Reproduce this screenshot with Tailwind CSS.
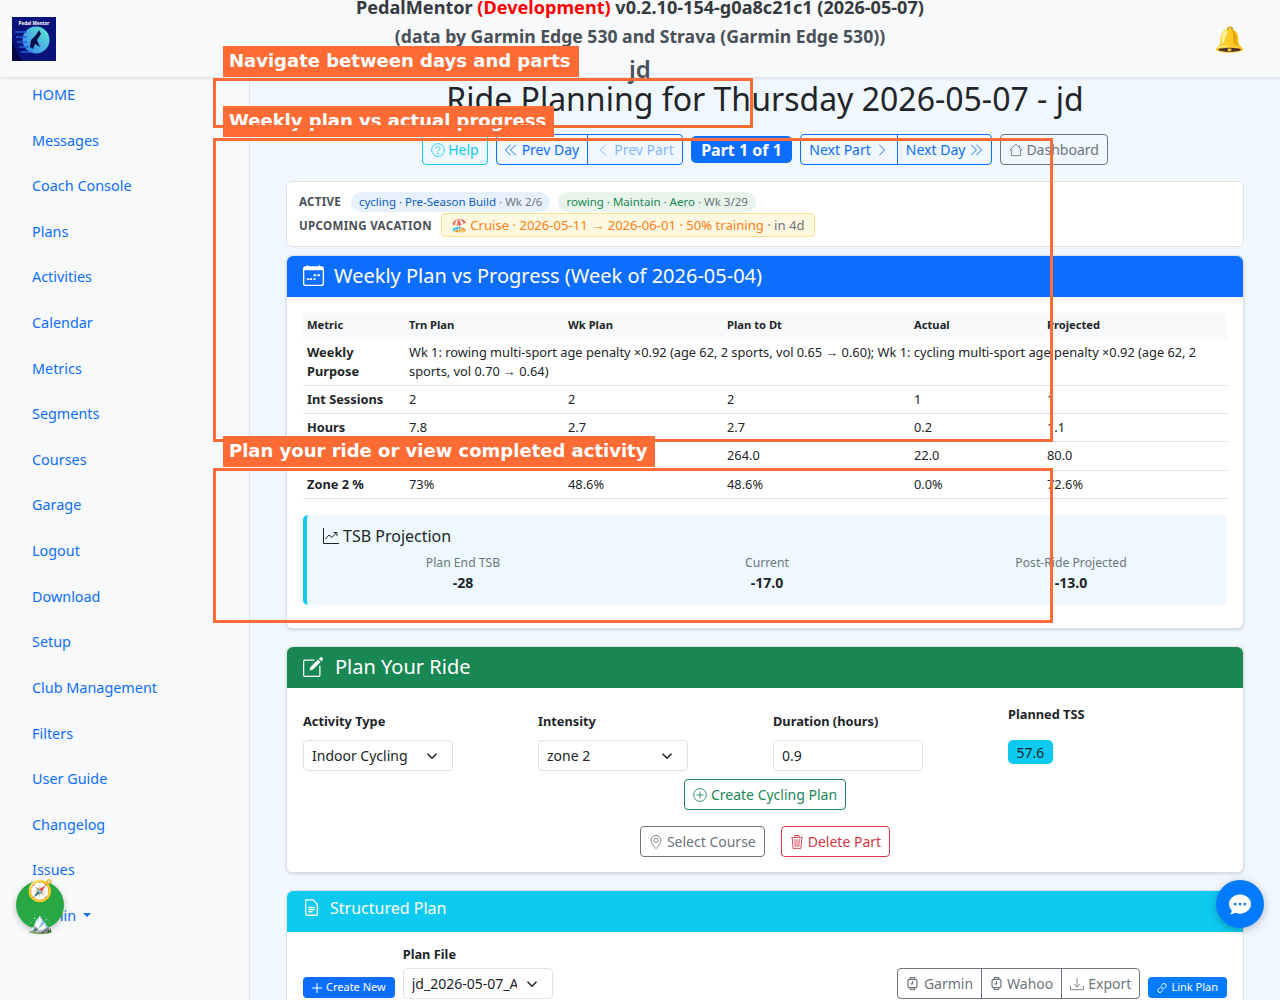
<!DOCTYPE html>
<html><head><meta charset="utf-8"><script src="https://cdn.jsdelivr.net/npm/@tailwindcss/browser@4"></script></head>
<body class="m-0">
<div class="relative h-[1000px] w-[1280px] overflow-hidden bg-[#f0f7fe] font-['Noto_Sans',sans-serif] text-[#212529]">
  <header class="relative z-10 flex h-[77px] items-center justify-between bg-[#f8f9fa] pl-3 pr-[35px] shadow-[0_1px_4px_rgba(0,0,0,0.12)]">
    <svg class="h-[44px] w-[44px] shrink-0" viewBox="0 0 44 44"><defs><linearGradient id="lg" x1="0" y1="1" x2="1" y2="0"><stop offset="0" stop-color="#2f7df0"/><stop offset="1" stop-color="#63ecd0"/></linearGradient></defs><rect width="44" height="44" fill="#07127a"/><path d="M0 26 L10 44 H0Z" fill="#020540"/><circle cx="24" cy="23" r="13.500" fill="url(#lg)"/><path d="M3 15 H15 M4 20 H15 M5 25 H15 M7 30 H17 M9 35 H19" stroke="#2a5fd0" stroke-width="1.600"/><path d="M27 13 L29 17 L25 23 L28 30 L23 27 L21 32 L18 30 L19 23 L24 18Z" fill="#08104a"/><text x="22" y="7.500" text-anchor="middle" font-size="4.600" font-weight="700" fill="#fff">Pedal Mentor</text></svg>
    <div class="absolute left-0 right-0 top-[-7px] text-center text-[17.6px] leading-[29px] font-bold text-[#343a40]">
      <div class="text-[18.1px]">PedalMentor <span class="text-[#ff0000]">(Development)</span> v0.2.10-154-g0a8c21c1 (2026-05-07)</div>
      <div class="text-[#495057]">(data by Garmin Edge 530 and Strava (Garmin Edge 530))</div>
      <div class="mt-[3px] text-[24px] font-semibold text-[#495057]">jd</div>
    </div>
    <span class="text-[25px] leading-none">🔔</span>
  </header>
  <div class="flex h-[923px]">
    <aside class="w-[250px] shrink-0 border-r border-[#dee2e6] bg-[#f8f9fa] pl-8 pt-[6px]">
      <nav class="flex flex-col gap-[22.62px] text-[14.4px] leading-[23px] text-[#0d6efd]">
        <a>HOME</a><a>Messages</a><a>Coach Console</a><a>Plans</a><a>Activities</a><a>Calendar</a><a>Metrics</a><a>Segments</a><a>Courses</a><a>Garage</a><a>Logout</a><a>Download</a><a>Setup</a><a>Club Management</a><a>Filters</a><a>User Guide</a><a>Changelog</a><a>Issues</a>
        <a class="flex items-center gap-[7px]">Admin <span class="h-0 w-0 border-x-[4px] border-t-[4px] border-x-transparent border-t-[#0d6efd]"></span></a>
      </nav>
    </aside>
    <main class="min-w-0 flex-1 px-[36px]">
      <h1 class="mt-[2px] text-center text-[32px] leading-[40px] font-normal text-[#212529]">Ride Planning for Thursday 2026-05-07 - jd</h1>
      <div class="mt-[15px] flex items-center justify-center gap-2 text-[14px] leading-[20px]">
        <a class="flex h-[31px] items-center gap-[3px] rounded border border-[#0dcaf0] px-2 text-[#0dcaf0]"><svg class="h-[14px] w-[14px]" viewBox="0 0 16 16" fill="none" stroke="currentColor"><circle cx="8" cy="8" r="7.3"/><path d="M5.6 6.2c0-3 4.8-3 4.8-.1 0 1.8-2.4 1.800-2.400 3.600" /><circle cx="8" cy="11.800" r=".5" fill="currentColor"/></svg>Help</a>
        <div class="flex h-[31px]">
          <a class="flex items-center gap-[4px] rounded-l border border-[#0d6efd] pl-[7px] pr-2 text-[#0d6efd]"><svg class="h-[14px] w-[14px]" viewBox="0 0 16 16" fill="none" stroke="currentColor" stroke-width="1.100"><path d="M7.500 2 1.500 8l6 6M13.500 2l-6 6 6 6"/></svg>Prev Day</a>
          <a class="ml-[-1px] flex items-center gap-[4px] rounded-r border border-[#0d6efd] px-2 text-[#86b7fe]"><svg class="h-[14px] w-[14px]" viewBox="0 0 16 16" fill="none" stroke="currentColor" stroke-width="1.100"><path d="M11 2 5 8l6 6"/></svg>Prev Part</a>
        </div>
        <span class="flex h-[27px] items-center rounded-[5px] bg-[#0d6efd] px-[10.5px] text-[16px] font-bold text-white">Part 1 of 1</span>
        <div class="flex h-[31px]">
          <a class="flex items-center gap-[4px] rounded-l border border-[#0d6efd] px-2 text-[#0d6efd]">Next Part<svg class="h-[14px] w-[14px]" viewBox="0 0 16 16" fill="none" stroke="currentColor" stroke-width="1.100"><path d="m5 2 6 6-6 6"/></svg></a>
          <a class="ml-[-1px] flex items-center gap-[4px] rounded-r border border-[#0d6efd] px-2 text-[#0d6efd]">Next Day<svg class="h-[14px] w-[14px]" viewBox="0 0 16 16" fill="none" stroke="currentColor" stroke-width="1.100"><path d="m2.500 2 6 6-6 6M8.500 2l6 6-6 6"/></svg></a>
        </div>
        <a class="flex h-[31px] items-center gap-[3px] rounded border border-[#6c757d] px-2 text-[#6c757d]"><svg class="h-[14px] w-[14px]" viewBox="0 0 16 16" fill="none" stroke="currentColor"><path d="M8 1.500 1 8h2v6.500h10V8h2zM12 3v3"/></svg>Dashboard</a>
      </div>

      <section class="mt-[16px] flex h-[66px] flex-col justify-center gap-[3px] rounded-[6px] border border-[#dee2e6] bg-white px-3 text-[11.5px]">
        <div class="flex h-[20px] items-center pt-[2px]">
          <span class="mr-[10px] font-bold tracking-[0.3px] text-[#495057]">ACTIVE</span>
          <span class="rounded-full bg-[#e7f1fb] px-2 py-[2px] leading-[16px] text-[#0d5ec0]">cycling · Pre-Season Build <span class="text-[#6c757d]">· Wk 2/6</span></span>
          <span class="ml-[8px] rounded-full bg-[#e8f4ea] px-2 py-[2px] leading-[16px] text-[#198754]">rowing · Maintain · Aero <span class="text-[#6c757d]">· Wk 3/29</span></span>
        </div>
        <div class="flex h-[24px] items-center">
          <span class="mr-[9px] font-bold tracking-[0.35px] text-[#495057]">UPCOMING VACATION</span>
          <span class="mb-[2px] rounded-[4px] border border-[#ffe08a] bg-[#fff8e1] px-[9px] py-[2px] text-[13.1px] leading-[18px] text-[#fd7e14]">🏖️ Cruise · 2026-05-11 → 2026-06-01 · 50% training <span class="text-[#6c757d]">· in 4d</span></span>
        </div>
      </section>

      <section class="mt-2 h-[374px] rounded-[6px] border border-[#dee2e6] bg-white shadow-[0_1px_3px_rgba(0,0,0,0.15)]">
        <div class="flex h-[41px] items-center gap-[10px] rounded-t-[6px] bg-[#0d6efd] px-4 pb-[2px] text-[20px] text-white">
          <svg class="h-[21px] w-[21px]" viewBox="0 0 16 16" fill="currentColor"><path d="M3.500 0a.5.5 0 0 1 .5.5V1h8V.5a.5.5 0 0 1 1 0V1h1a2 2 0 0 1 2 2v11a2 2 0 0 1-2 2H2a2 2 0 0 1-2-2V3a2 2 0 0 1 2-2h1V.5a.5.5 0 0 1 .5-.5zM1 4v10a1 1 0 0 0 1 1h12a1 1 0 0 0 1-1V4H1z"/><path d="M11 7h2v1.500h-2zM8 7h2v1.500H8zM5 10h2v1.500H5zM3 10h1.500v1.500H3zM8 10h1.500v1.500H8z"/></svg>
          Weekly Plan vs Progress (Week of 2026-05-04)
        </div>
        <div class="px-4 pt-4">
          <table class="w-[924px] table-fixed border-collapse text-[12.8px] leading-[19px]">
            <colgroup><col class="w-[102px]"><col class="w-[159px]"><col class="w-[159px]"><col class="w-[187px]"><col class="w-[133px]"><col></colgroup>
            <thead><tr class="h-[26px] bg-[#f8f9fa] text-left text-[11.2px] font-bold"><th class="px-1 pb-[4px]">Metric</th><th class="px-1 pb-[4px]">Trn Plan</th><th class="px-1 pb-[4px]">Wk Plan</th><th class="px-1 pb-[4px]">Plan to Dt</th><th class="px-1 pb-[4px]">Actual</th><th class="px-1 pb-[4px]">Projected</th></tr></thead>
            <tbody>
              <tr class="h-[46px] border-b border-[#dee2e6]"><td class="px-1 font-bold">Weekly Purpose</td><td colspan="5" class="px-1">Wk 1: rowing multi-sport age penalty ×0.92 (age 62, 2 sports, vol 0.65 → 0.60); Wk 1: cycling multi-sport age penalty ×0.92 (age 62, 2 sports, vol 0.70 → 0.64)</td></tr>
              <tr class="h-[28px] border-b border-[#dee2e6]"><td class="px-1 font-bold">Int Sessions</td><td class="px-1">2</td><td class="px-1">2</td><td class="px-1">2</td><td class="px-1">1</td><td class="px-1">1</td></tr>
              <tr class="h-[28px] border-b border-[#dee2e6]"><td class="px-1 font-bold">Hours</td><td class="px-1">7.8</td><td class="px-1">2.7</td><td class="px-1">2.7</td><td class="px-1">0.2</td><td class="px-1">1.1</td></tr>
              <tr class="h-[29px] border-b border-[#dee2e6]"><td class="px-1 font-bold">TSS</td><td class="px-1">431</td><td class="px-1">264.0</td><td class="px-1">264.0</td><td class="px-1">22.0</td><td class="px-1">80.0</td></tr>
              <tr class="h-[28px] border-b border-[#dee2e6]"><td class="px-1 font-bold">Zone 2 %</td><td class="px-1">73%</td><td class="px-1">48.6%</td><td class="px-1">48.6%</td><td class="px-1">0.0%</td><td class="px-1">72.6%</td></tr>
            </tbody>
          </table>
          <div class="mt-4 h-[90px] rounded-[5px] border-l-4 border-[#0dcaf0] bg-[#edf9fe] px-1">
            <div class="flex items-center gap-1 pl-[12px] pt-[9px] text-[16px] leading-[24px]"><svg class="h-[16px] w-[16px]" viewBox="0 0 16 16" fill="none" stroke="currentColor"><path d="M.5 0v15.500H16M2.500 11l3.500-4 3 2.500L13.500 4.500M10.500 4.500h3.500V8"/></svg>TSB Projection</div>
            <div class="mt-[5px] grid grid-cols-3 text-center">
              <div><div class="text-[12.2px] leading-[20px] text-[#6c757d]">Plan End TSB</div><div class="text-[14px] leading-[20px] font-bold">-28</div></div>
              <div><div class="text-[12.2px] leading-[20px] text-[#6c757d]">Current</div><div class="text-[14px] leading-[20px] font-bold">-17.0</div></div>
              <div><div class="text-[12.2px] leading-[20px] text-[#6c757d]">Post-Ride Projected</div><div class="text-[14px] leading-[20px] font-bold">-13.0</div></div>
            </div>
          </div>
        </div>
      </section>

      <section class="mt-[17px] h-[227px] rounded-[6px] border border-[#dee2e6] bg-white shadow-[0_1px_3px_rgba(0,0,0,0.15)]">
        <div class="flex h-[41px] items-center gap-[12px] rounded-t-[6px] bg-[#198754] px-4 pb-[2px] text-[20px] text-white">
          <svg class="h-[20px] w-[20px]" viewBox="0 0 16 16" fill="currentColor"><path d="M15.500.5a1.400 1.400 0 0 0-2 0l-.8.8 2 2 .8-.8a1.400 1.400 0 0 0 0-2zM12 2 6 8l-.8 2.800L8 10l6-6z"/><path fill-rule="evenodd" d="M1.500 2A1.500 1.500 0 0 0 0 3.500v11A1.500 1.500 0 0 0 1.500 16h11a1.500 1.500 0 0 0 1.500-1.500V7h-1v7.500a.5.5 0 0 1-.5.5h-11a.5.5 0 0 1-.5-.5v-11a.5.5 0 0 1 .5-.5H9V2z"/></svg>
          Plan Your Ride
        </div>
        <div class="relative px-4 pt-[16px]">
          <div class="grid grid-cols-[repeat(4,235px)] text-[12.8px] font-bold">
            <div><div class="h-[26px] pt-[8px] leading-[19px]">Activity Type</div><div class="mt-[10px] flex h-[31px] w-[150px] items-center justify-between rounded border border-[#dee2e6] pl-2 pr-[14px] text-[14px] font-normal">Indoor Cycling<svg class="h-[12px] w-[12px]" viewBox="0 0 16 16" fill="none" stroke="currentColor" stroke-width="2"><path d="m2 5 6 6 6-6"/></svg></div></div>
            <div><div class="h-[26px] pt-[8px] leading-[19px]">Intensity</div><div class="mt-[10px] flex h-[31px] w-[150px] items-center justify-between rounded border border-[#dee2e6] pl-2 pr-[14px] text-[14px] font-normal">zone 2<svg class="h-[12px] w-[12px]" viewBox="0 0 16 16" fill="none" stroke="currentColor" stroke-width="2"><path d="m2 5 6 6 6-6"/></svg></div></div>
            <div><div class="h-[26px] pt-[8px] leading-[19px]">Duration (hours)</div><div class="mt-[10px] flex h-[31px] w-[150px] items-center rounded border border-[#dee2e6] pl-2 text-[14px] font-normal">0.9</div></div>
            <div><div class="h-[26px] pt-[1px] leading-[19px]">Planned TSS</div><span class="mt-[10px] inline-flex h-[24px] items-center rounded-[5px] bg-[#0dcaf0] px-[8.5px] text-[14px] font-normal">57.6</span></div>
          </div>
          <div class="mt-2 flex justify-center"><a class="flex h-[31px] items-center gap-1 rounded border border-[#198754] px-2 text-[14px] text-[#198754]"><svg class="h-[14px] w-[14px]" viewBox="0 0 16 16" fill="none" stroke="currentColor"><circle cx="8" cy="8" r="7.300"/><path d="M8 4v8M4 8h8"/></svg>Create Cycling Plan</a></div>
          <div class="mt-4 flex justify-center gap-4 text-[14px]">
            <a class="flex h-[31px] items-center gap-1 rounded border border-[#6c757d] px-2 text-[#6c757d]"><svg class="h-[14px] w-[14px]" viewBox="0 0 16 16" fill="none" stroke="currentColor"><path d="M8 15.500S2.500 10 2.500 6a5.500 5.500 0 0 1 11 0c0 4-5.500 9.500-5.500 9.500z"/><circle cx="8" cy="6" r="2.500"/></svg>Select Course</a>
            <a class="flex h-[31px] items-center gap-1 rounded border border-[#dc3545] px-2 text-[#dc3545]"><svg class="h-[14px] w-[14px]" viewBox="0 0 16 16" fill="currentColor"><path d="M6.5 1h3a.5.5 0 0 1 .5.5v1H6v-1a.5.5 0 0 1 .5-.5M11 2.500v-1A1.500 1.500 0 0 0 9.500 0h-3A1.500 1.500 0 0 0 5 1.500v1H1.500a.5.5 0 0 0 0 1h.538l.853 10.660A2 2 0 0 0 4.885 16h6.230a2 2 0 0 0 1.994-1.840l.853-10.660h.538a.5.5 0 0 0 0-1zm1.958 1-.846 10.580a1 1 0 0 1-.997.920h-6.230a1 1 0 0 1-.997-.920L3.042 3.500zm-7.487 1a.5.5 0 0 1 .528.470l.5 8.500a.5.5 0 0 1-.998.060L5 5.030a.5.5 0 0 1 .470-.530Zm5.058 0a.5.5 0 0 1 .470.530l-.5 8.500a.5.5 0 1 1-.998-.060l.5-8.500a.5.5 0 0 1 .528-.470M8 4.500a.5.5 0 0 1 .5.500v8.500a.5.5 0 0 1-1 0V5a.5.5 0 0 1 .5-.5"/></svg>Delete Part</a>
          </div>
        </div>
      </section>

      <section class="mt-[17px] rounded-[6px] border border-[#dee2e6] bg-white pb-3">
        <div class="flex h-[41px] items-center gap-[10px] rounded-t-[6px] bg-[#0dcaf0] px-4 pb-[8px] text-[16px] text-white">
          <svg class="h-[17px] w-[17px]" viewBox="0 0 16 16" fill="none" stroke="currentColor" stroke-width="1.200"><path d="M3 .8h6.500L13.500 5v9a1.300 1.300 0 0 1-1.300 1.300H3.800A1.300 1.300 0 0 1 2.500 14V2A1.300 1.300 0 0 1 3 .8zM5 8h6M5 10h6M5 12h4"/></svg>
          Structured Plan
        </div>
        <div class="flex items-end px-4 pt-[13px]">
          <a class="mb-[1px] flex h-[21px] items-center gap-1 rounded-[4px] bg-[#0d6efd] px-[9px] text-[11px] text-white"><svg class="h-[10px] w-[10px]" viewBox="0 0 10 10" stroke="currentColor" stroke-width="1"><path d="M5 0v10M0 5h10"/></svg>Create New</a>
          <div class="ml-2"><div class="text-[12.8px] leading-[19px] font-bold">Plan File</div><div class="mt-[4px] flex h-[31px] w-[150px] items-center justify-between rounded border border-[#dee2e6] pl-2 pr-[14px] text-[14px]"><span class="w-[105px] overflow-hidden whitespace-nowrap">jd_2026-05-07_Aerobic</span><svg class="h-[12px] w-[12px]" viewBox="0 0 16 16" fill="none" stroke="currentColor" stroke-width="2"><path d="m2 5 6 6 6-6"/></svg></div></div>
          <div class="ml-auto flex h-[31px] text-[14px] text-[#6c757d]">
            <a class="flex items-center gap-[5px] rounded-l border border-[#6c757d] px-2"><svg class="h-[13px] w-[13px]" viewBox="0 0 16 16" fill="none" stroke="currentColor" stroke-width="1.500"><rect x="2.500" y="3" width="11" height="10" rx="2"/><path d="M5 3 5.500 .5h5L11 3M5 13l.5 2.500h5L11 13M8 5v3.500H5.500"/></svg>Garmin</a>
            <a class="ml-[-1px] flex items-center gap-1 border border-[#6c757d] px-2"><svg class="h-[13px] w-[13px]" viewBox="0 0 16 16" fill="none" stroke="currentColor" stroke-width="1.500"><rect x="2.500" y="3" width="11" height="10" rx="2"/><path d="M5 3 5.500 .5h5L11 3M5 13l.5 2.500h5L11 13M8 5v3.500H5.500"/></svg>Wahoo</a>
            <a class="ml-[-1px] flex items-center gap-1 rounded-r border border-[#6c757d] px-2"><svg class="h-[14px] w-[14px]" viewBox="0 0 16 16" fill="none" stroke="currentColor"><path d="M.5 10v4.500h15V10M8 1v10M4.500 8 8 11.500 11.500 8"/></svg>Export</a>
          </div>
          <a class="mb-[1px] ml-2 flex h-[21px] items-center gap-1 rounded-[4px] bg-[#007bff] px-[9px] text-[11px] text-white"><svg class="h-[10px] w-[10px]" viewBox="0 0 16 16" fill="none" stroke="currentColor" stroke-width="1.600"><path d="M7 4l2-2a3 3 0 0 1 5 4l-3 3a3 3 0 0 1-4 0M9 12l-2 2a3 3 0 0 1-5-4l3-3a3 3 0 0 1 4 0"/></svg>Link Plan</a>
        </div>
      </section>
    </main>
  </div>

  <!-- floating buttons -->
  <div class="absolute left-4 top-[881px] z-20 h-[48px] w-[48px] rounded-full bg-[#28a745] shadow-[0_2px_6px_rgba(0,0,0,0.25)]"></div>
  <span class="absolute left-[27px] top-[877px] z-20 text-[21px] leading-[26px]">🧭</span>
  <span class="absolute left-[27px] top-[909px] z-20 text-[21px] leading-[26px]">🏔️</span>
  <div class="absolute left-[1216px] top-[880px] z-20 flex h-[48px] w-[48px] items-center justify-center rounded-full bg-[#007bff] shadow-[0_2px_8px_rgba(0,0,0,0.25)]">
    <svg class="h-[22px] w-[22px]" viewBox="0 0 16 16" fill="#fff"><path d="M8 15c4.400 0 8-3.100 8-7s-3.600-7-8-7-8 3.100-8 7c0 1.800.8 3.400 2 4.700-.1 1-.5 2-1.100 2.800 1.500-.2 3-.8 3.700-1.200 1 .4 2.200.7 3.400.7z"/><circle cx="4.500" cy="8" r="1" fill="#007bff"/><circle cx="8" cy="8" r="1" fill="#007bff"/><circle cx="11.500" cy="8" r="1" fill="#007bff"/></svg>
  </div>

  <!-- tour overlays -->
  <div class="absolute left-[223px] top-[46px] z-30 h-[31px] bg-[#ff6b35] pl-[6px] pr-[8px] font-['DejaVu_Sans',sans-serif] text-[18px] leading-[30px] font-bold text-white">Navigate between days and parts</div>
  <div class="absolute left-[223px] top-[106px] z-30 h-[31px] bg-[#ff6b35] pl-[6px] pr-[8px] font-['DejaVu_Sans',sans-serif] text-[18px] leading-[30px] font-bold text-white">Weekly plan vs actual progress</div>
  <div class="absolute left-[223px] top-[436px] z-30 h-[31px] bg-[#ff6b35] pl-[6px] pr-[8px] font-['DejaVu_Sans',sans-serif] text-[18px] leading-[30px] font-bold text-white">Plan your ride or view completed activity</div>
  <div class="absolute left-[213px] top-[78px] z-40 h-[50px] w-[540px] border-[3px] border-[#ff6b35]"></div>
  <div class="absolute left-[213px] top-[138px] z-40 h-[304px] w-[840px] border-[3px] border-[#ff6b35]"></div>
  <div class="absolute left-[213px] top-[468px] z-40 h-[155px] w-[840px] border-[3px] border-[#ff6b35]"></div>
</div>
</body></html>
